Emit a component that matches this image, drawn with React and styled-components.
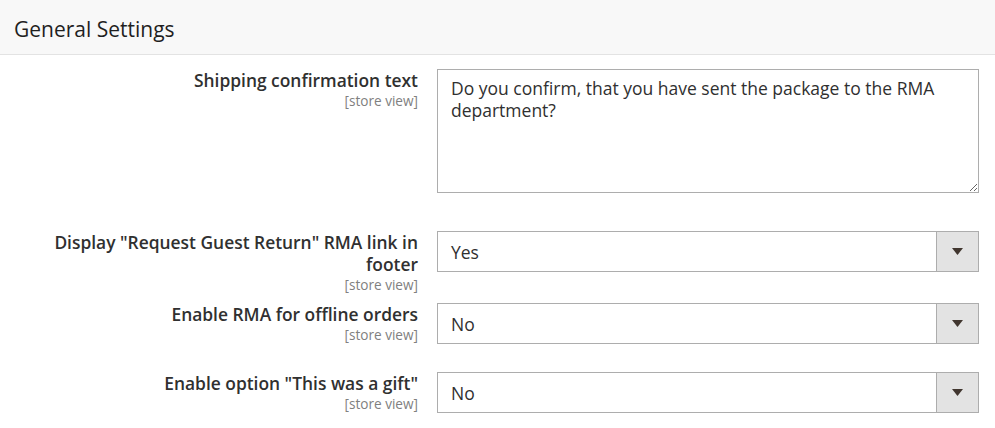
import React from "react";
import styled, { createGlobalStyle } from "styled-components";

const GlobalStyle = createGlobalStyle`
  body {
    margin: 0;
    background: #ffffff;
    font-family: "Open Sans", "Liberation Sans", sans-serif;
    color: #303030;
  }
`;

const Section = styled.section`
  width: 995px;
`;

const SectionHeader = styled.div`
  height: 54px;
  display: flex;
  align-items: center;
  padding: 0 14px;
  background: #f8f8f8;
  border-bottom: 1px solid #e3e3e3;
`;

const Title = styled.h2`
  margin: 0;
  font-size: 21px;
  font-weight: 400;
  color: #1f1f1f;
  padding-top: 3px;
`;

const Fields = styled.div`
  padding-top: 14px;
`;

const Row = styled.div`
  display: grid;
  grid-template-columns: 418px 542px;
  column-gap: 19px;
  align-items: start;
  height: ${({ $h }) => ($h ? `${$h}px` : "auto")};
`;

const Label = styled.label`
  text-align: right;
  font-size: 17.4px;
  font-weight: 600;
  line-height: 22px;
  color: #303030;
`;

const Scope = styled.div`
  margin-top: 3px;
  font-size: 13.6px;
  font-weight: 400;
  line-height: 13px;
  color: #808080;
`;

const TextArea = styled.textarea`
  box-sizing: border-box;
  width: 542px;
  height: 124px;
  margin: 0;
  padding: 7px 13px;
  border: 1px solid #adadad;
  border-radius: 0;
  font-family: "Open Sans", "Liberation Sans", sans-serif;
  font-size: 17.5px;
  line-height: 22px;
  color: #303030;
  outline: none;
`;

const SelectBox = styled.div`
  box-sizing: border-box;
  height: 41px;
  display: flex;
  border: 1px solid #adadad;
  background: #ffffff;
`;

const SelectValue = styled.div`
  flex: 1;
  display: flex;
  align-items: center;
  padding-left: 13px;
  font-size: 17.5px;
  color: #303030;
`;

const SelectButton = styled.div`
  width: 41px;
  display: flex;
  align-items: center;
  justify-content: center;
  background: #e3e3e3;
  border-left: 1px solid #adadad;
`;

const Arrow = () => (
  <svg width="11" height="7" viewBox="0 0 11 7">
    <path d="M0 0 H11 L5.5 7 Z" fill="#41362f" />
  </svg>
);

const Select = ({ value }) => (
  <SelectBox>
    <SelectValue>{value}</SelectValue>
    <SelectButton>
      <Arrow />
    </SelectButton>
  </SelectBox>
);

const FieldLabel = ({ children }) => (
  <Label>
    {children}
    <Scope>[store view]</Scope>
  </Label>
);

export default function App() {
  return (
    <>
      <GlobalStyle />
      <Section>
        <SectionHeader>
          <Title>General Settings</Title>
        </SectionHeader>
        <Fields>
          <Row $h={162}>
            <FieldLabel>Shipping confirmation text</FieldLabel>
            <TextArea
              defaultValue="Do you confirm, that you have sent the package to the RMA department?"
            />
          </Row>
          <Row $h={72}>
            <FieldLabel>Display "Request Guest Return" RMA link in footer</FieldLabel>
            <Select value="Yes" />
          </Row>
          <Row $h={69}>
            <FieldLabel>Enable RMA for offline orders</FieldLabel>
            <Select value="No" />
          </Row>
          <Row>
            <FieldLabel>Enable option "This was a gift"</FieldLabel>
            <Select value="No" />
          </Row>
        </Fields>
      </Section>
    </>
  );
}
